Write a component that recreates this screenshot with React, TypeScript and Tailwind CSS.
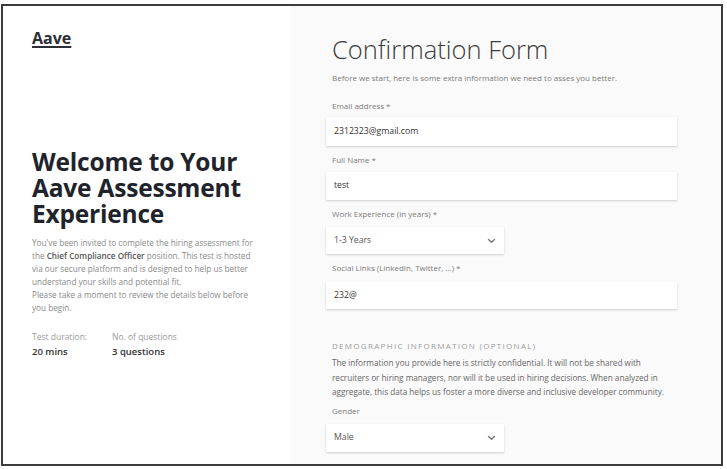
import React from "react";

const Label = ({ children, className = "" }: { children: React.ReactNode; className?: string }) => (
  <div className={`ml-[6px] text-[8px] leading-[12px] text-[#7a7a7a] ${className}`}>{children}</div>
);

const Input = ({ value, h, className = "" }: { value: string; h: string; className?: string }) => (
  <div
    className={`w-[351px] ${h} bg-white flex items-center pl-[8px] text-[8.7px] text-[#333] shadow-[0_1px_2px_rgba(0,0,0,0.18)] ${className}`}
  >
    {value}
  </div>
);

const Select = ({ value, h, className = "" }: { value: string; h: string; className?: string }) => (
  <div
    className={`w-[178px] ${h} bg-white flex items-center justify-between pl-[8px] pr-[8px] text-[8.7px] text-[#555] shadow-[0_1px_2px_rgba(0,0,0,0.18)] ${className}`}
  >
    <span>{value}</span>
    <svg width="9" height="6" viewBox="0 0 9 6" fill="none">
      <path d="M1.5 1.5 L4.5 4.3 L7.5 1.5" stroke="#777" strokeWidth="1.4" strokeLinecap="round" strokeLinejoin="round" />
    </svg>
  </div>
);

export default function App() {
  return (
    <div className="w-[727px] h-[469px] bg-white overflow-hidden" style={{ fontFamily: '"Open Sans", "Noto Sans", sans-serif' }}>
      <div className="mt-[4px] ml-[1px] w-[722px] h-[462px] border-2 border-[#3c3c3c] flex">
        {/* Left panel */}
        <div className="w-[287px] h-full bg-white pl-[29px] pt-[22px] flex flex-col">
          <div className="text-[16px] leading-[20px] font-bold text-[#2a2f38] underline underline-offset-2 decoration-[1.5px]">
            Aave
          </div>
          <h1 className="mt-[101px] text-[24.5px] leading-[26px] font-bold text-[#1f242c] tracking-[-0.2px]">
            Welcome to Your
            <br />
            Aave Assessment
            <br />
            Experience
          </h1>
          <div className="mt-[9px] text-[8.2px] leading-[13px] text-[#8a8a8a] whitespace-nowrap">
            <p>
              You've been invited to complete the hiring assessment for
              <br />
              the <span className="font-semibold text-[#555]">Chief Compliance Officer</span> position. This test is hosted
              <br />
              via our secure platform and is designed to help us better
              <br />
              understand your skills and potential fit.
            </p>
            <p>
              Please take a moment to review the details below before
              <br />
              you begin.
            </p>
          </div>
          <div className="mt-[16px] flex">
            <div className="w-[80px]">
              <div className="text-[8.5px] leading-[13px] text-[#9a9a9a]">Test duration:</div>
              <div className="mt-[2px] text-[9.5px] leading-[14px] font-semibold text-[#333]">20 mins</div>
            </div>
            <div>
              <div className="text-[8.5px] leading-[13px] text-[#9a9a9a]">No. of questions</div>
              <div className="mt-[2px] text-[9.5px] leading-[14px] font-semibold text-[#333]">3 questions</div>
            </div>
          </div>
        </div>

        {/* Right panel */}
        <div className="flex-1 h-full bg-[#fafafa] pl-[36px] pt-[28px] flex flex-col">
          <h2 className="ml-[6px] text-[25.5px] leading-[30px] font-light text-[#3a3a3a]">Confirmation Form</h2>
          <Label className="mt-[8px] text-[#6a6a6a]">Before we start, here is some extra information we need to asses you better.</Label>

          <Label className="mt-[16px]">Email address *</Label>
          <Input value="2312323@gmail.com" h="h-[29px]" className="mt-[5px]" />

          <Label className="mt-[8px]">Full Name *</Label>
          <Input value="test" h="h-[28px]" className="mt-[6px]" />

          <Label className="mt-[8px]">Work Experience (in years) *</Label>
          <Select value="1-3 Years" h="h-[27px]" className="mt-[7px]" />

          <Label className="mt-[8px]">Social Links (LinkedIn, Twitter, ...) *</Label>
          <Input value="232@" h="h-[27px]" className="mt-[8px]" />

          <div className="mt-[31px] ml-[6px] text-[8px] leading-[12px] tracking-[1.3px] text-[#9a9a9a]">
            DEMOGRAPHIC INFORMATION (OPTIONAL)
          </div>
          <div className="mt-[4px] ml-[6px] text-[8.2px] leading-[14.5px] text-[#666] whitespace-nowrap">
            The information you provide here is strictly confidential. It will not be shared with
            <br />
            recruiters or hiring managers, nor will it be used in hiring decisions. When analyzed in
            <br />
            aggregate, this data helps us foster a more diverse and inclusive developer community.
          </div>

          <Label className="mt-[5px]">Gender</Label>
          <Select value="Male" h="h-[28px]" className="mt-[7px]" />
        </div>
      </div>
    </div>
  );
}
